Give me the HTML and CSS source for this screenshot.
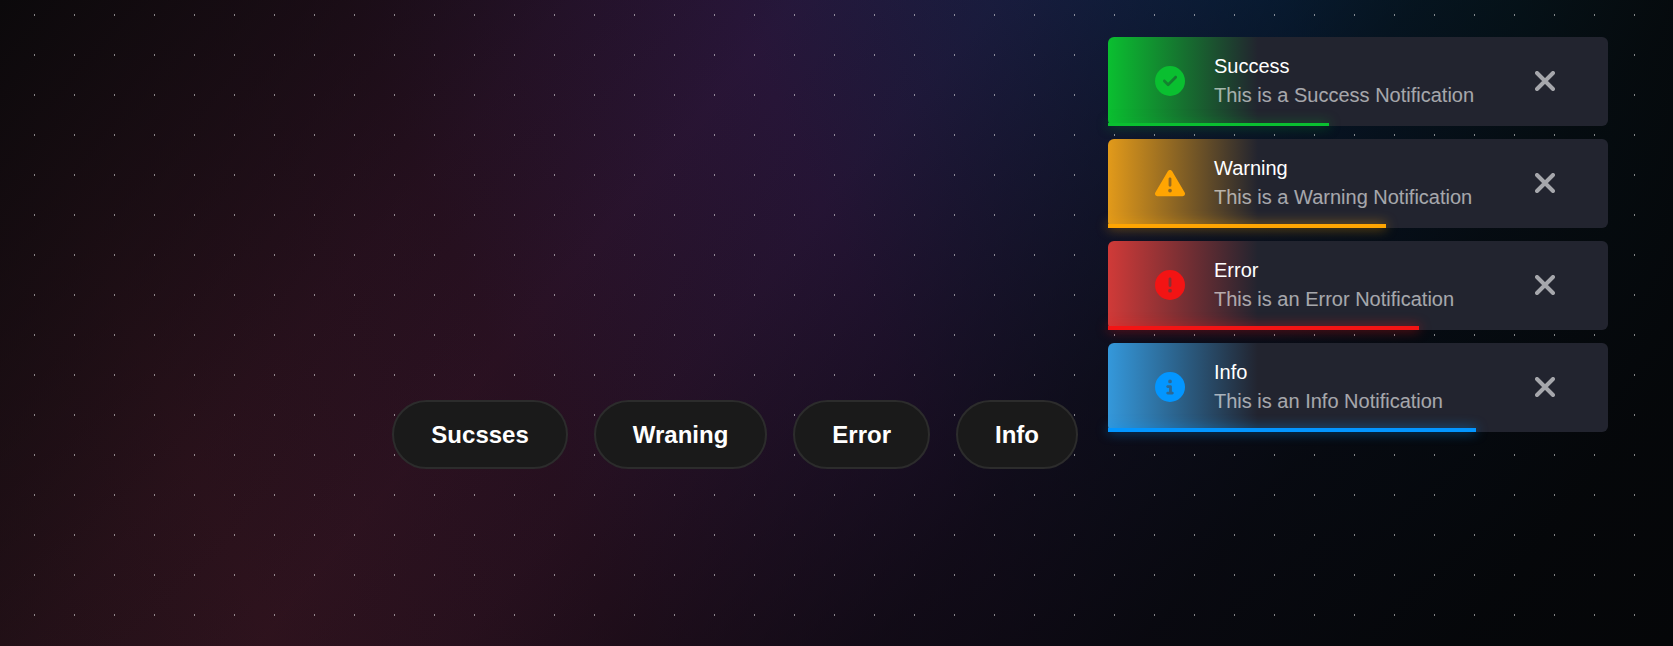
FILE: index.html
```
<!DOCTYPE html>
<html lang="en">
<head>
<meta charset="utf-8">
<meta name="viewport" content="width=device-width, initial-scale=1">
<title>Toast Notifications</title>
<link rel="stylesheet" href="styles.css">
</head>
<body>
<main class="page">
  <div class="actions">
    <button type="button" class="action">Sucsses</button>
    <button type="button" class="action">Wraning</button>
    <button type="button" class="action">Error</button>
    <button type="button" class="action">Info</button>
  </div>
  <div class="toasts">
    <div class="toast success">
      <svg class="icon" viewBox="0 0 512 512" aria-hidden="true"><path fill="currentColor" fill-rule="evenodd" d="M256 512A256 256 0 1 0 256 0a256 256 0 1 0 0 512zM369 209L241 337c-9.400 9.400-24.600 9.400-33.900 0l-64-64c-9.400-9.400-9.400-24.600 0-33.900s24.600-9.400 33.900 0l47 47L335 175c9.400-9.400 24.600-9.400 33.900 0s9.400 24.600 0 33.900z"/></svg>
      <div class="content"><div class="title">Success</div><div class="message">This is a Success Notification</div></div>
      <button type="button" class="close" aria-label="Close"><svg viewBox="0 0 20 20"><path d="M2 2L18 18M18 2L2 18"/></svg></button>
    </div>
    <div class="toast warning">
      <svg class="icon" viewBox="0 0 512 512" aria-hidden="true"><path fill="currentColor" fill-rule="evenodd" d="M256 32c14.200 0 27.300 7.500 34.500 19.800l216 368c7.300 12.400 7.300 27.700.2 40.100S486.300 480 472 480H40c-14.300 0-27.600-7.700-34.700-20.100s-7-27.800.2-40.100l216-368C228.700 39.500 241.800 32 256 32zm0 128c-13.300 0-24 10.700-24 24v112c0 13.300 10.700 24 24 24s24-10.700 24-24V184c0-13.300-10.700-24-24-24zm32 224a32 32 0 1 0-64 0 32 32 0 1 0 64 0z"/></svg>
      <div class="content"><div class="title">Warning</div><div class="message">This is a Warning Notification</div></div>
      <button type="button" class="close" aria-label="Close"><svg viewBox="0 0 20 20"><path d="M2 2L18 18M18 2L2 18"/></svg></button>
    </div>
    <div class="toast error">
      <svg class="icon" viewBox="0 0 512 512" aria-hidden="true"><path fill="currentColor" fill-rule="evenodd" d="M256 512A256 256 0 1 0 256 0a256 256 0 1 0 0 512zm0-384c13.300 0 24 10.700 24 24v112c0 13.300-10.700 24-24 24s-24-10.700-24-24V152c0-13.300 10.700-24 24-24zM224 352a32 32 0 1 1 64 0 32 32 0 1 1-64 0z"/></svg>
      <div class="content"><div class="title">Error</div><div class="message">This is an Error Notification</div></div>
      <button type="button" class="close" aria-label="Close"><svg viewBox="0 0 20 20"><path d="M2 2L18 18M18 2L2 18"/></svg></button>
    </div>
    <div class="toast info">
      <svg class="icon" viewBox="0 0 512 512" aria-hidden="true"><path fill="currentColor" fill-rule="evenodd" d="M256 512A256 256 0 1 0 256 0a256 256 0 1 0 0 512zM216 336h24V272H216c-13.300 0-24-10.700-24-24s10.700-24 24-24h48c13.300 0 24 10.700 24 24v88h8c13.300 0 24 10.700 24 24s-10.700 24-24 24H216c-13.300 0-24-10.700-24-24s10.700-24 24-24zm40-208a32 32 0 1 1 0 64 32 32 0 1 1 0-64z"/></svg>
      <div class="content"><div class="title">Info</div><div class="message">This is an Info Notification</div></div>
      <button type="button" class="close" aria-label="Close"><svg viewBox="0 0 20 20"><path d="M2 2L18 18M18 2L2 18"/></svg></button>
    </div>
  </div>
</main>
</body>
</html>
```
FILE: styles.css
```
* { box-sizing: border-box; }

body {
  margin: 0;
  font-family: "Liberation Sans", Arial, sans-serif;
  color: #fff;
  background: #040506;
}

.page {
  display: flex;
  justify-content: flex-end;
  align-items: flex-start;
  gap: 30px;
  min-height: 100vh;
  padding: 37px 65px 0 24px;
  background:
    conic-gradient(from 90deg at 39px 38px, #ffffff80 90deg, transparent 0) -5px -24px / 40px 40px,
    linear-gradient(130deg, #0b090b 0%, #0b090b90 14%, #0b090b30 26%, #05060808 36%, #05060820 45%, #05060860 54%, #050608a8 64%, #050608dc 76%, #050608f8 90%, #050608 100%),
    linear-gradient(66deg, #28121a 0%, #2f131e 14%, #2a1122 32%, #29163a 52%, #1a2046 67%, #0a2c54 80%, #053246 92%, #0a2830 100%);
}

.actions {
  display: flex;
  align-self: flex-end;
  gap: 26px;
  margin-bottom: 177px;
}

.action {
  padding: 19px 37px;
  border: 2px solid #2c2c2c;
  border-radius: 35px;
  background: #1a1a1a;
  color: #fff;
  font: bold 24px/27px "Liberation Sans", Arial, sans-serif;
  cursor: pointer;
}

.toasts {
  display: grid;
  gap: 13px;
  width: 500px;
  flex-shrink: 0;
}

.toast {
  position: relative;
  display: grid;
  grid-template-columns: 76px 1fr 76px;
  align-items: center;
  column-gap: 6px;
  padding: 14px 25px 16px 24px;
  border-radius: 6px;
  background: linear-gradient(to right, var(--tint), #22242f 30%);
}

.toast::before {
  content: "";
  position: absolute;
  left: 0;
  bottom: 0;
  width: var(--progress);
  height: 4px;
  background: var(--accent);
  box-shadow: 0 0 12px var(--glow);
}

.toast.success::before { height: 3px; }

.success { --accent: #0abf30; --glow: #0abf3099; --tint: #0abf30; --progress: 221px; }
.warning { --accent: #ffa502; --glow: #ffa502b3; --tint: #e29a1a; --progress: 278px; }
.error { --accent: #f31414; --glow: #f31414b3; --tint: #d03a38; --progress: 311px; }
.info { --accent: #0396ff; --glow: #0396ffb3; --tint: #3498db; --progress: 368px; }

.icon {
  width: 30px;
  height: 30px;
  justify-self: center;
  color: var(--accent);
}

.title { font-size: 20px; line-height: 30px; }
.message { font-size: 20px; line-height: 29px; opacity: .6; }

.close {
  display: grid;
  justify-self: center;
  padding: 0;
  border: 0;
  background: none;
  opacity: .6;
  cursor: pointer;
}

.close svg {
  width: 20px;
  height: 20px;
  stroke: #fff;
  stroke-width: 4;
  stroke-linecap: round;
}
```
